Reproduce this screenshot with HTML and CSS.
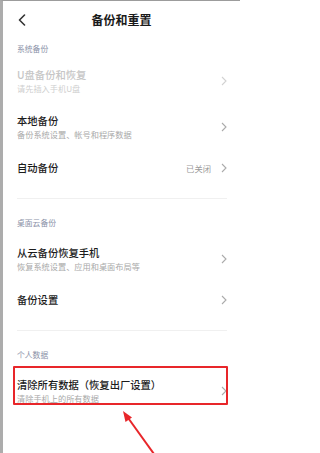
FILE: index.html
```html
<!DOCTYPE html>
<html lang="zh-CN">
<head>
<meta charset="utf-8">
<title>备份和重置</title>
<link rel="stylesheet" href="styles.css">
</head>
<body>
<div class="screen">
  <header class="topbar">
    <span class="back">
      <svg width="8" height="12" viewBox="0 0 8 12"><path d="M6.5 1 L1.5 6 L6.5 11" fill="none" stroke="#333" stroke-width="1.6" stroke-linecap="round" stroke-linejoin="round"/></svg>
    </span>
    <h1 class="title">备份和重置</h1>
    <span class="spacer"></span>
  </header>

  <section class="group">
    <div class="label label-first">系统备份</div>
    <div class="row two disabled">
      <div class="text">
        <div class="name">U盘备份和恢复</div>
        <div class="sub">请先插入手机U盘</div>
      </div>
      <svg class="chev" width="6" height="10" viewBox="0 0 6 10"><path d="M1 1 L5 5 L1 9" fill="none" stroke-width="1.1"/></svg>
    </div>
    <div class="row two">
      <div class="text">
        <div class="name">本地备份</div>
        <div class="sub">备份系统设置、帐号和程序数据</div>
      </div>
      <svg class="chev" width="6" height="10" viewBox="0 0 6 10"><path d="M1 1 L5 5 L1 9" fill="none" stroke-width="1.1"/></svg>
    </div>
    <div class="row one">
      <div class="text">
        <div class="name">自动备份</div>
      </div>
      <span class="value">已关闭</span>
      <svg class="chev" width="6" height="10" viewBox="0 0 6 10"><path d="M1 1 L5 5 L1 9" fill="none" stroke-width="1.1"/></svg>
    </div>
  </section>
  <div class="divider"></div>

  <section class="group">
    <div class="label">桌面云备份</div>
    <div class="row two">
      <div class="text">
        <div class="name">从云备份恢复手机</div>
        <div class="sub">恢复系统设置、应用和桌面布局等</div>
      </div>
      <svg class="chev" width="6" height="10" viewBox="0 0 6 10"><path d="M1 1 L5 5 L1 9" fill="none" stroke-width="1.1"/></svg>
    </div>
    <div class="row one">
      <div class="text">
        <div class="name">备份设置</div>
      </div>
      <svg class="chev" width="6" height="10" viewBox="0 0 6 10"><path d="M1 1 L5 5 L1 9" fill="none" stroke-width="1.1"/></svg>
    </div>
  </section>
  <div class="divider"></div>

  <section class="group">
    <div class="label">个人数据</div>
    <div class="row two">
      <div class="text">
        <div class="name">清除所有数据（恢复出厂设置）</div>
        <div class="sub">清除手机上的所有数据</div>
      </div>
      <svg class="chev" width="6" height="10" viewBox="0 0 6 10"><path d="M1 1 L5 5 L1 9" fill="none" stroke-width="1.1"/></svg>
    </div>
  </section>

  <div class="highlight"></div>
  <svg class="arrow" width="240" height="453" viewBox="0 0 240 453">
    <line x1="154" y1="454" x2="128.5" y2="418.5" stroke="#e8262a" stroke-width="2"/>
    <polygon points="123,411 132,417.5 125.5,422" fill="#e8262a"/>
  </svg>
</div>
</body>
</html>
```

FILE: styles.css
```css
* { box-sizing: border-box; margin: 0; padding: 0; }

html, body {
  width: 240px;
  height: 453px;
  overflow: hidden;
  background: #fff;
}

body {
  font-family: "Noto Sans CJK SC", "Noto Sans", "Liberation Sans", sans-serif;
  color: #1c1c1c;
}

.screen {
  position: relative;
  width: 240px;
  height: 453px;
  border-left: 3px solid #acacac;
  border-top: 1px solid #9c9c9c;
  background: #fff;
}

.topbar {
  display: flex;
  align-items: center;
  height: 37px;
}

.back {
  width: 30px;
  padding-left: 15px;
  display: flex;
  align-items: center;
}

.spacer { width: 30px; }

.title {
  flex: 1;
  text-align: center;
  font-size: 12px;
  font-weight: 700;
  line-height: 16px;
  color: #1a1a1a;
}

.label {
  font-size: 7.8px;
  line-height: 12px;
  color: #8a91a8;
  padding: 18px 14px 7px;
}

.label-first {
  padding-top: 5px;
  padding-bottom: 3px;
}

.row {
  display: flex;
  align-items: center;
  padding: 10px 13px 10px 14px;
}

.row.two { min-height: 46px; }
.row.one { min-height: 35px; }

.row .text {
  flex: 1;
  min-width: 0;
}

.name {
  font-size: 10.3px;
  line-height: 14px;
  font-weight: 500;
  color: #1c1c1c;
  white-space: nowrap;
}

.sub {
  font-size: 8.2px;
  line-height: 11px;
  margin-top: 1px;
  color: #a9a9a9;
  white-space: nowrap;
}

.value {
  font-size: 8.3px;
  line-height: 12px;
  color: #9a9a9a;
  margin-right: 10px;
}

.chev {
  flex: none;
  stroke: #ababab;
}

.disabled .name { color: #c6c6c6; }
.disabled .sub { color: #cfcfcf; }
.disabled .chev { stroke: #d2d2d2; }

.divider {
  height: 1px;
  background: #f0f0f0;
  margin: 13px 13px 0 14px;
}

.highlight {
  position: absolute;
  left: 10px;
  top: 365px;
  width: 215px;
  height: 39px;
  border: 2px solid #e8262a;
  border-radius: 1px;
}

.arrow {
  position: absolute;
  left: -3px;
  top: -1px;
  pointer-events: none;
}
```
